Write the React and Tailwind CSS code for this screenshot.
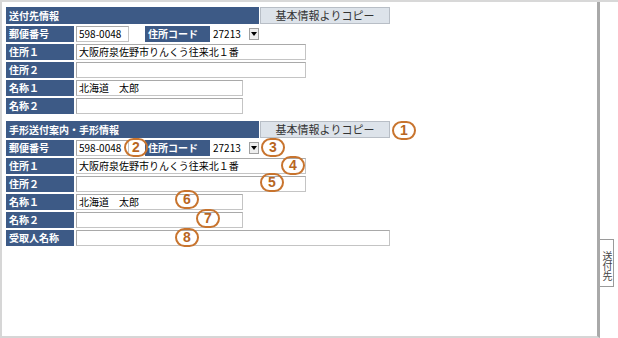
import React from 'react';

const font = { fontFamily: '"Noto Sans CJK JP", "Noto Sans", sans-serif' };

const Label = ({ children, w = 'w-[68px]' }) => (
  <div className={`${w} h-full bg-[#3d5a86] text-white font-bold text-[10px] leading-[16px] pl-[3px] shrink-0 whitespace-nowrap`}>
    {children}
  </div>
);

const Input = ({ w, value }) => (
  <div className={`${w} h-full bg-white border border-[#c4c4c4] border-t-[#a9a9a9] border-l-[#a9a9a9] text-[10px] leading-[14px] pl-[2px] text-black shrink-0 whitespace-nowrap overflow-hidden`}>
    {value}
  </div>
);

const Select = ({ value }) => (
  <div className="w-[48px] h-full bg-white flex items-center justify-between text-[10px] leading-[14px] pl-[1px] pr-[1px] shrink-0">
    <span>{value}</span>
    <span className="w-[10px] h-[12px] bg-[#eeeeee] border border-[#a0a0a0] flex items-center justify-center">
      <svg width="6" height="4" viewBox="0 0 6 4"><path d="M0 0h6L3 4z" fill="#000" /></svg>
    </span>
  </div>
);

const Section = ({ title, withRecipient }) => (
  <div className="flex flex-col gap-[2px]">
    <div className="flex h-[17px] gap-[1px]">
      <div className="w-[253px] h-full bg-[#3d5a86] text-white font-bold text-[10px] leading-[17px] pl-[3px]">{title}</div>
      <div className="w-[130px] h-full bg-[#dde3ea] border border-[#b8bec6] text-[#333] text-[11px] leading-[15px] text-center">
        基本情報よりコピー
      </div>
    </div>
    <div className="flex h-[16px] gap-[2px]">
      <Label>郵便番号</Label>
      <Input w="w-[53px]" value="598-0048" />
      <div className="w-[12px]" />
      <Label w="w-[65px]">住所コード</Label>
      <Select value="27213" />
    </div>
    <div className="flex h-[16px] gap-[2px]">
      <Label>住所１</Label>
      <Input w="w-[230px]" value="大阪府泉佐野市りんくう往来北１番" />
    </div>
    <div className="flex h-[16px] gap-[2px]">
      <Label>住所２</Label>
      <Input w="w-[230px]" value="" />
    </div>
    <div className="flex h-[16px] gap-[2px]">
      <Label>名称１</Label>
      <Input w="w-[167px]" value="北海道　太郎" />
    </div>
    <div className="flex h-[16px] gap-[2px]">
      <Label>名称２</Label>
      <Input w="w-[167px]" value="" />
    </div>
    {withRecipient && (
      <div className="flex h-[16px] gap-[2px]">
        <Label>受取人名称</Label>
        <Input w="w-[314px]" value="" />
      </div>
    )}
  </div>
);

const Marker = ({ n, x, y }) => (
  <div
    className="absolute w-[24px] h-[19px] rounded-full border-2 border-[#c8742e] text-[#b8661f] text-[14px] font-semibold leading-[15px] text-center"
    style={{ left: x - 12, top: y - 9.5, fontFamily: '"Liberation Sans", sans-serif' }}
  >
    {n}
  </div>
);

export default function App() {
  return (
    <div className="w-[618px] h-[338px] flex bg-white border-t-2 border-[#d8d8d8] overflow-hidden" style={font}>
      <div className="relative w-[600px] h-[336px] border-l-2 border-b-2 border-[#d6d6d6] border-r-[3px] border-r-[#a9a9a9] pl-[4px] pt-[5px] flex flex-col gap-[7px]">
        <Section title="送付先情報" />
        <Section title="手形送付案内・手形情報" withRecipient />
        <Marker n="1" x={402} y={128} />
        <Marker n="2" x={134} y={145} />
        <Marker n="3" x={271} y={145} />
        <Marker n="4" x={291} y={163} />
        <Marker n="5" x={270} y={180} />
        <Marker n="6" x={185} y={197} />
        <Marker n="7" x={206} y={216} />
        <Marker n="8" x={185} y={235} />
      </div>
      <div className="flex flex-col pt-[237px]">
        <div className="w-[14px] h-[48px] border border-l-0 border-[#9a9a9a] bg-white flex justify-center pt-[6px] text-[10px] leading-[12px] text-[#444] [writing-mode:vertical-rl]">
          送付先
        </div>
      </div>
    </div>
  );
}
